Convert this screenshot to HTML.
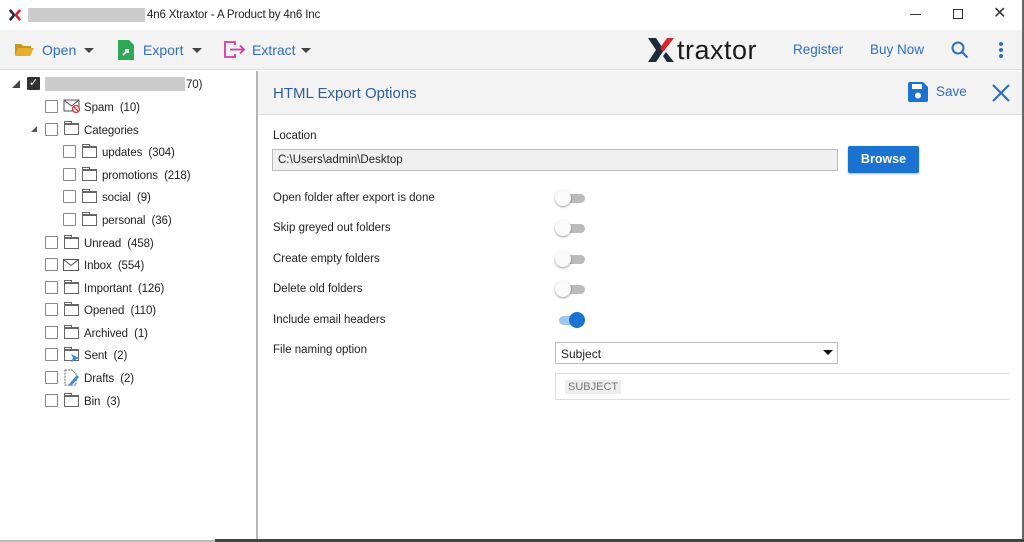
<!DOCTYPE html>
<html><head><meta charset="utf-8"><style>
*{margin:0;padding:0;box-sizing:border-box}
body{width:1024px;height:542px;background:#fff;font-family:"Liberation Sans",sans-serif;position:relative;overflow:hidden;color:#222}
.a{position:absolute;white-space:nowrap}
.cb{position:absolute;width:13px;height:13px;border:1.5px solid #888;background:#fff;border-radius:1px}
.fd{position:absolute;width:15px;height:12px;border:1px solid #666;border-top-width:2px}
.fd:before{content:"";position:absolute;left:-1px;top:-4px;width:6px;height:3px;border:1px solid #666;border-bottom:none}
.t{position:absolute;font-size:11.5px;white-space:nowrap;color:#222;letter-spacing:-.1px;margin-top:2px}
.lbl{position:absolute;left:273px;font-size:11.5px;color:#222}
.sw{position:absolute;left:555px;width:30px;height:16px}
.sw:before{content:"";position:absolute;left:4px;top:4px;width:26px;height:9px;border-radius:5px;background:#bbb}
.sw:after{content:"";position:absolute;left:0;top:0;width:16px;height:16px;border-radius:50%;background:#fafafa;box-shadow:0 1px 2px rgba(0,0,0,.4)}
.on:before{background:#9cc6ef}
.on:after{left:14px;background:#1a73d0;box-shadow:none}
.nav{color:#2f6fc0;font-size:14px}
</style></head><body>
<svg class="a" style="left:9px;top:9px" width="12" height="12" viewBox="0 0 14 14"><path d="M1 1L6 7L1 13" stroke="#1b2b3e" stroke-width="3" fill="none"/><path d="M13 1L8 7L13 13" stroke="#d8232a" stroke-width="3" fill="none"/></svg>
<div class="a" style="left:28px;top:8px;width:117px;height:14px;background:#ccc"></div>
<div class="a" style="left:147px;top:9px;font-size:11.5px;letter-spacing:-.15px">4n6 Xtraxtor - A Product by 4n6 Inc</div>
<div class="a" style="left:910px;top:14px;width:11px;height:1px;background:#333"></div>
<div class="a" style="left:953px;top:9px;width:10px;height:10px;border:1px solid #333"></div>
<div class="a" style="left:993px;top:3px;font-size:16px;color:#333">✕</div>
<div class="a" style="left:0;top:30px;width:1024px;height:40px;background:#f3f3f3;border-bottom:1px solid #ddd"></div>
<svg class="a" style="left:14px;top:42px" width="20" height="15"><path d="M1 2h6l2 2h8v2H5L1 14z" fill="#c8951d"/><path d="M4 6h16l-4 8H1z" fill="#e5ae2b"/></svg>
<div class="a nav" style="left:42px;top:42px">Open</div>
<div class="a" style="left:84px;top:48px;border:5px solid transparent;border-top:5px solid #444"></div>
<svg class="a" style="left:118px;top:40px" width="16" height="20"><path d="M0 0h11l5 5v15H0z" fill="#2fa856"/><path d="M5 15l5-5M7 10h3v3" stroke="#fff" stroke-width="1.8" fill="none"/></svg>
<div class="a nav" style="left:143px;top:42px">Export</div>
<div class="a" style="left:192px;top:48px;border:5px solid transparent;border-top:5px solid #444"></div>
<svg class="a" style="left:224px;top:41px" width="22" height="17"><path d="M11 4V1H1v15h10v-3" stroke="#d63aa8" stroke-width="1.8" fill="none"/><path d="M6 8.5h14M16 4.5l4 4-4 4" stroke="#d63aa8" stroke-width="1.8" fill="none"/></svg>
<div class="a nav" style="left:252px;top:42px">Extract</div>
<div class="a" style="left:301px;top:48px;border:5px solid transparent;border-top:5px solid #444"></div>
<svg class="a" style="left:646px;top:37px" width="30" height="26"><path d="M2 1h8l8 12-8 12H2l8-12z" fill="#1b2b3e"/><path d="M28 1h-7l-7 10 3 4z" fill="#d8232a"/><path d="M28 25h-7l-4-6 3-4z" fill="#1b2b3e"/></svg>
<div class="a" style="left:677px;top:35px;font-size:27px;color:#1b1b1b;letter-spacing:.5px">traxtor</div>
<div class="a nav" style="left:793px;top:42px;font-size:13.5px">Register</div>
<div class="a nav" style="left:870px;top:42px;font-size:13.5px">Buy Now</div>
<svg class="a" style="left:951px;top:41px" width="18" height="18"><circle cx="7" cy="7" r="5.5" stroke="#2f6fc0" stroke-width="2" fill="none"/><path d="M11 11l5.5 5.5" stroke="#2f6fc0" stroke-width="2.2"/></svg>
<svg class="a" style="left:998px;top:41px" width="6" height="18"><circle cx="3" cy="3" r="2" fill="#2f6fc0"/><circle cx="3" cy="9" r="2" fill="#2f6fc0"/><circle cx="3" cy="15" r="2" fill="#2f6fc0"/></svg>
<div class="a" style="left:256px;top:71px;width:2px;height:471px;background:#b5b5b5"></div>
<div class="a" style="left:12px;top:80px;border:4px solid transparent;border-right-color:#444;border-bottom-color:#444;width:0;height:0"></div>
<div class="cb" style="left:27px;top:77px;background:#333;border-color:#333"></div>
<div class="a" style="left:29px;top:76px;color:#fff;font-size:11px">✓</div>
<div class="a" style="left:45px;top:77px;width:140px;height:14px;background:#ccc"></div>
<div class="t" style="left:186px;top:77px">70)</div>
<div class="cb" style="left:45px;top:100px"></div>
<svg class="a" style="left:63px;top:99px" width="18" height="15"><rect x="1" y="1" width="15" height="11" fill="none" stroke="#555"/><path d="M1 1l7.5 6L16 1" stroke="#555" fill="none"/><circle cx="13" cy="10" r="3.5" fill="#fff" stroke="#e0333a" stroke-width="1.3"/><path d="M10.5 7.5l5 5" stroke="#e0333a" stroke-width="1.3"/></svg>
<div class="t" style="left:84px;top:100px">Spam&nbsp; (10)</div>
<div class="a" style="left:31px;top:126px;border:3.5px solid transparent;border-right-color:#555;border-bottom-color:#555"></div>
<div class="cb" style="left:45px;top:123px"></div><div class="fd" style="left:64px;top:123px"></div>
<div class="t" style="left:84px;top:123px">Categories</div>
<div class="cb" style="left:63px;top:145px"></div><div class="fd" style="left:82px;top:146px"></div><div class="t" style="left:102px;top:145px">updates&nbsp; (304)</div>
<div class="cb" style="left:63px;top:168px"></div><div class="fd" style="left:82px;top:169px"></div><div class="t" style="left:102px;top:168px">promotions&nbsp; (218)</div>
<div class="cb" style="left:63px;top:190px"></div><div class="fd" style="left:82px;top:191px"></div><div class="t" style="left:102px;top:190px">social&nbsp; (9)</div>
<div class="cb" style="left:63px;top:213px"></div><div class="fd" style="left:82px;top:214px"></div><div class="t" style="left:102px;top:213px">personal&nbsp; (36)</div>
<div class="cb" style="left:45px;top:236px"></div><div class="fd" style="left:64px;top:237px"></div><div class="t" style="left:84px;top:236px">Unread&nbsp; (458)</div>
<div class="cb" style="left:45px;top:258px"></div><svg class="a" style="left:63px;top:259px" width="17" height="13"><rect x=".5" y=".5" width="15" height="11" fill="none" stroke="#555"/><path d="M.5 .5l7.5 6 7.5-6" stroke="#555" fill="none"/></svg><div class="t" style="left:84px;top:258px">Inbox&nbsp; (554)</div>
<div class="cb" style="left:45px;top:281px"></div><div class="fd" style="left:64px;top:282px"></div><div class="t" style="left:84px;top:281px">Important&nbsp; (126)</div>
<div class="cb" style="left:45px;top:303px"></div><div class="fd" style="left:64px;top:304px"></div><div class="t" style="left:84px;top:303px">Opened&nbsp; (110)</div>
<div class="cb" style="left:45px;top:326px"></div><div class="fd" style="left:64px;top:327px"></div><div class="t" style="left:84px;top:326px">Archived&nbsp; (1)</div>
<div class="cb" style="left:45px;top:348px"></div><div class="fd" style="left:64px;top:349px"></div><svg class="a" style="left:70px;top:353px" width="10" height="10"><path d="M1 1l8 4-8 4 2-4z" fill="#3a8ad6"/></svg><div class="t" style="left:84px;top:348px">Sent&nbsp; (2)</div>
<div class="cb" style="left:45px;top:371px"></div><svg class="a" style="left:64px;top:369px" width="16" height="17"><path d="M1 1h7l4 4v11H1z" fill="none" stroke="#666" stroke-dasharray="2 1"/><path d="M6 14l7-8 2 2-7 8-3 1z" fill="#3a8ad6"/></svg><div class="t" style="left:84px;top:371px">Drafts&nbsp; (2)</div>
<div class="cb" style="left:45px;top:394px"></div><div class="fd" style="left:64px;top:395px"></div><div class="t" style="left:84px;top:394px">Bin&nbsp; (3)</div>
<div class="a" style="left:258px;top:71px;width:766px;height:44px;background:#f3f3f3;border-bottom:1px solid #ddd"></div>
<div class="a" style="left:273px;top:85px;font-size:15px;color:#2f5f96">HTML Export Options</div>
<svg class="a" style="left:908px;top:82px" width="20" height="20"><path d="M0 2a2 2 0 0 1 2-2h13l5 5v13a2 2 0 0 1-2 2H2a2 2 0 0 1-2-2z" fill="#1a73d0"/><rect x="4" y="2" width="10" height="5" fill="#fff"/><circle cx="10" cy="13.5" r="3" fill="#fff"/></svg>
<div class="a nav" style="left:936px;top:84px;font-size:13.5px">Save</div>
<svg class="a" style="left:992px;top:84px" width="18" height="18"><path d="M1 1l16 16M17 1L1 17" stroke="#2f6fc0" stroke-width="2.2"/></svg>
<div class="lbl" style="top:130px">Location</div>
<div class="a" style="left:272px;top:149px;width:566px;height:22px;background:#f0f0f0;border:1px solid #bbb"></div>
<div class="a" style="left:278px;top:154px;font-size:11.5px">C:\Users\admin\Desktop</div>
<div class="a" style="left:848px;top:146px;width:71px;height:27px;background:#1a73d0;border-radius:2px;color:#fff;font-size:12.5px;font-weight:bold;text-align:center;line-height:27px;box-shadow:0 1px 2px rgba(0,0,0,.3)">Browse</div>
<div class="lbl" style="top:192px">Open folder after export is done</div><div class="sw" style="top:190px"></div>
<div class="lbl" style="top:222px">Skip greyed out folders</div><div class="sw" style="top:220px"></div>
<div class="lbl" style="top:253px">Create empty folders</div><div class="sw" style="top:251px"></div>
<div class="lbl" style="top:283px">Delete old folders</div><div class="sw" style="top:281px"></div>
<div class="lbl" style="top:314px">Include email headers</div><div class="sw on" style="top:312px"></div>
<div class="lbl" style="top:344px">File naming option</div>
<div class="a" style="left:555px;top:342px;width:283px;height:22px;border:1px solid #bbb;background:#fff;border-radius:1px"></div>
<div class="a" style="left:561px;top:347px;font-size:12px">Subject</div>
<div class="a" style="left:823px;top:350px;border:5px solid transparent;border-top:5px solid #111;border-bottom:0"></div>
<div class="a" style="left:555px;top:373px;width:454px;height:27px;border:1px solid #ddd;border-right:none"></div>
<div class="a" style="left:565px;top:380px;padding:1px 3px;background:#eee;font-size:11px;color:#777">SUBJECT</div>
<div class="a" style="left:1022px;top:0;width:2px;height:542px;background:#666"></div>
<div class="a" style="left:215px;top:539px;width:809px;height:3px;background:#444"></div>
<div class="a" style="left:0;top:540px;width:215px;height:2px;background:#bbb"></div>
</body></html>
